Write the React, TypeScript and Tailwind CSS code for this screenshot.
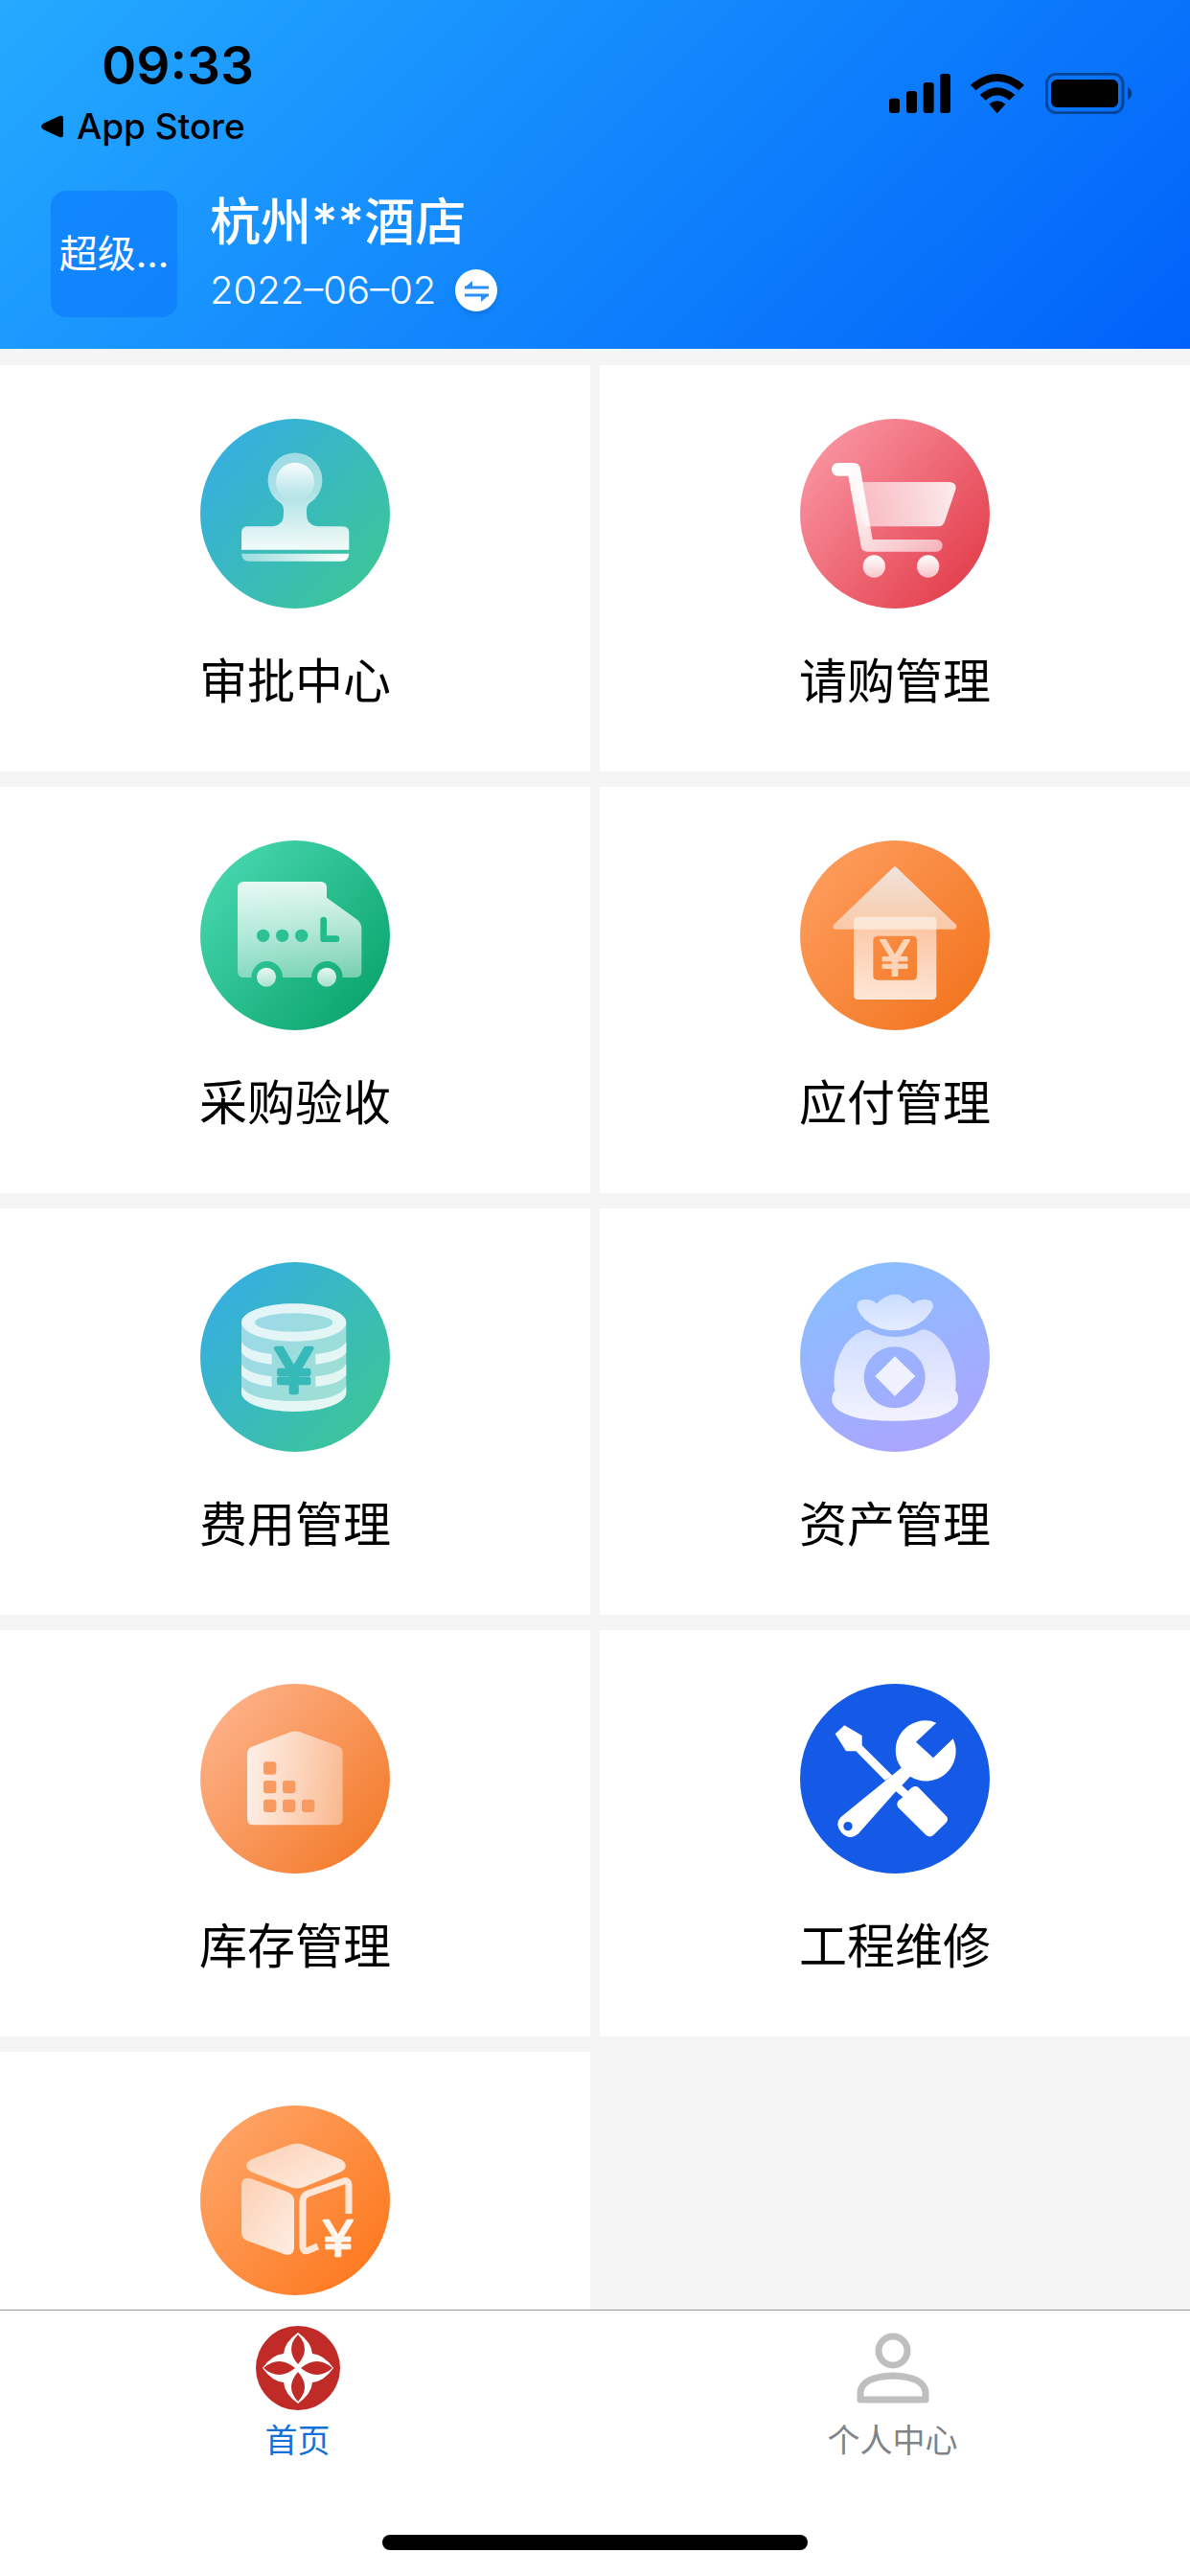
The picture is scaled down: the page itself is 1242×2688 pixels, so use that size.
import type { ReactNode } from 'react';
import clsx from 'clsx';

type CircleIconProps = {
  id: string;
  from: string;
  to: string;
  top?: number;
  children: ReactNode;
};

// round gradient badge shared by every menu icon
function CircleIcon({ id, from, to, top = 51, children }: CircleIconProps) {
  return (
    <svg className="size-[198px]" viewBox={`57 ${top} 594 594`} aria-hidden="true">
      <defs>
        <linearGradient id={id} x1="0.1" y1="0.15" x2="0.9" y2="0.85">
          <stop offset="0" stopColor={from} />
          <stop offset="1" stopColor={to} />
        </linearGradient>
      </defs>
      <circle cx="354" cy={top + 297} r="297" fill={`url(#${id})`} />
      {children}
    </svg>
  );
}

type FadeProps = { id: string; from: number; to: number; horizontal?: boolean };

// white gradient that only changes its opacity
function Fade({ id, from, to, horizontal }: FadeProps) {
  return (
    <linearGradient id={id} x1="0" y1="0" x2={horizontal ? '1' : '0'} y2={horizontal ? '0' : '1'}>
      <stop offset="0" stopColor="#fff" stopOpacity={from} />
      <stop offset="1" stopColor="#fff" stopOpacity={to} />
    </linearGradient>
  );
}

type YenProps = { x: number; y: number; size: number; color: string; weight: number };

function Yen({ x, y, size, color, weight }: YenProps) {
  return (
    <text
      x={x}
      y={y}
      textAnchor="middle"
      fontSize={size}
      fill={color}
      stroke={color}
      strokeWidth={weight}
      strokeLinejoin="round"
      className="font-['Liberation_Sans',sans-serif]"
    >
      ¥
    </text>
  );
}

function StampIcon() {
  return (
    <CircleIcon id="stamp" from="#36afdf" to="#3cc59a">
      <Fade id="stampHead" from={0.95} to={0} />
      <Fade id="stampBar" from={0.5} to={1} horizontal />
      <linearGradient id="stampBody" x1="0" y1="0" x2="0" y2="1">
        <stop offset="0" stopColor="#fff" stopOpacity="0.52" />
        <stop offset="0.4" stopColor="#fff" stopOpacity="0.58" />
        <stop offset="1" stopColor="#fff" stopOpacity="0.94" />
      </linearGradient>
      <path
        d="M186 461V408Q186 388 206 388H285Q318 383 318 350V335Q318 322 306 313A85 85 0 1 1 402 313Q390 322 390 335V350Q390 383 423 388H503Q523 388 523 408V461Z"
        fill="url(#stampBody)"
      />
      <circle cx="354" cy="248" r="60" fill="url(#stampHead)" />
      <path d="M186 473H523Q521 497 500 497H209Q188 497 186 473Z" fill="url(#stampBar)" />
    </CircleIcon>
  );
}

function CartIcon() {
  return (
    <CircleIcon id="cart" from="#f9929f" to="#e4404e">
      <Fade id="cartBasket" from={0.5} to={0.88} horizontal />
      <Fade id="cartWheel" from={1} to={0.65} />
      <linearGradient id="cartFrame" x1="0" y1="0" x2="1" y2="1">
        <stop offset="0" stopColor="#fff" />
        <stop offset="0.3" stopColor="#fff" stopOpacity="0.92" />
        <stop offset="1" stopColor="#fff" stopOpacity="0.56" />
      </linearGradient>
      <path
        d="M236 249H525Q549 251 544 273L510 373Q505 388 490 388H272Q255 388 252 372L232 262Q230 249 236 249Z"
        fill="url(#cartBasket)"
      />
      <path
        d="M176 189H224Q243 189 246 208L284 429H484A19 19 0 0 1 484 467H268Q251 467 248 451L208 230H176A20 20 0 0 1 176 189Z"
        fill="url(#cartFrame)"
      />
      <circle cx="289" cy="513" r="35" fill="url(#cartWheel)" />
      <circle cx="458" cy="513" r="35" fill="url(#cartWheel)" />
    </CircleIcon>
  );
}

function TruckIcon() {
  return (
    <CircleIcon id="truck" from="#45d5ad" to="#0ca66e">
      <Fade id="truckBody" from={0.88} to={0.42} />
      <Fade id="truckWheel" from={0.9} to={0.6} />
      <path
        d="M194 180H434Q453 180 453 200V230L546 297Q562 309 562 326V460Q562 480 543 480H503A49 51 0 0 0 405 480H315A49 51 0 0 0 217 480H194Q174 480 174 460V200Q174 180 194 180Z"
        fill="url(#truckBody)"
      />
      <g fill="#2cc093">
        <circle cx="254" cy="349" r="20" />
        <circle cx="314" cy="349" r="20" />
        <circle cx="374" cy="349" r="20" />
      </g>
      <path d="M443 300V359H483" fill="none" stroke="#24bb8b" strokeWidth="20" strokeLinecap="round" strokeLinejoin="round" />
      <circle cx="264" cy="479" r="30" fill="url(#truckWheel)" />
      <circle cx="453" cy="479" r="30" fill="url(#truckWheel)" />
    </CircleIcon>
  );
}

function HouseIcon() {
  return (
    <CircleIcon id="house" from="#fd9b5a" to="#f37621">
      <linearGradient id="houseRoof" x1="0" y1="0" x2="0" y2="1">
        <stop offset="0" stopColor="#efe4dc" />
        <stop offset="1" stopColor="#fbc8a6" />
      </linearGradient>
      <Fade id="houseBody" from={0.5} to={0.8} />
      <path d="M347 137Q354 128 361 137L546 315Q550 329 540 329H168Q157 329 162 315Z" fill="url(#houseRoof)" />
      <path
        fillRule="evenodd"
        d="M239 290H470Q484 290 484 304V535Q484 549 470 549H239Q225 549 225 535V304Q225 290 239 290ZM300 350Q286 350 286 364V474Q286 488 300 488H409Q423 488 423 474V364Q423 350 409 350Z"
        fill="url(#houseBody)"
      />
      <Yen x={354} y={474} size={162} color="#fcd5b9" weight={6} />
    </CircleIcon>
  );
}

function CoinsIcon() {
  return (
    <CircleIcon id="coins" from="#36afdf" to="#3cc59a">
      <path d="M186 240A164 59 0 0 1 514 240V460A164 59 0 0 1 186 460Z" fill="#fff" fillOpacity="0.5" />
      <g fill="#fff" fillOpacity="0.72">
        <path fillRule="evenodd" d="M186 240A164 59 0 0 1 514 240A164 59 0 0 1 186 240ZM228 240A122 29 0 0 0 472 240A122 29 0 0 0 228 240Z" />
        <path d="M186 300Q203 331 281 339V371Q205 363 186 334Z" />
        <path d="M186 370Q203 401 281 409V441Q205 433 186 404Z" />
        <path d="M514 300Q497 331 418 339V371Q495 363 514 334Z" />
        <path d="M514 370Q497 401 418 409V441Q495 433 514 404Z" />
        <path d="M186 440Q210 485 350 486Q490 485 514 440V460A164 59 0 0 1 186 460Z" />
      </g>
      <Yen x={350} y={460} size={202} color="#37b9ba" weight={13} />
    </CircleIcon>
  );
}

function BagIcon() {
  return (
    <svg className="size-[198px]" viewBox="57 51 594 594" aria-hidden="true">
      <linearGradient id="bag" x1="0.3" y1="0.05" x2="0.7" y2="0.95">
        <stop offset="0" stopColor="#8abeff" />
        <stop offset="1" stopColor="#aba6ff" />
      </linearGradient>
      <Fade id="bagTop" from={0.52} to={0.75} />
      <Fade id="bagBody" from={0.55} to={0.85} />
      <circle cx="354" cy="348" r="297" fill="url(#bag)" />
      <path
        d="M235 188Q236 168 262 168Q285 168 297 181Q325 152 354 152Q385 152 411 181Q425 168 449 168Q474 168 474 190Q470 207 445 232Q405 265 354 265Q300 265 262 232Q237 207 235 188Z"
        fill="url(#bagTop)"
      />
      <path
        fillRule="evenodd"
        d="M272 262Q305 285 354 285Q405 285 438 262Q475 262 510 310Q545 365 545 425Q545 440 543 452Q556 468 551 490Q542 520 482 537Q430 548 354 548Q270 548 227 536Q162 517 157 485Q155 465 167 452Q163 440 163 425Q163 365 198 310Q235 265 272 262ZM257 412A96 96 0 0 0 449 412A96 96 0 0 0 257 412Z"
        fill="url(#bagBody)"
      />
      <path d="M354 346L418 408L354 471L292 408Z" fill="#f0f1ff" />
    </svg>
  );
}

function WarehouseIcon() {
  return (
    <CircleIcon id="warehouse" from="#fdb086" to="#f47d2e" top={53}>
      <Fade id="warehouseBody" from={0.82} to={0.4} horizontal />
      <path
        d="M328 208Q354 195 380 208L488 247Q503 253 503 268V475Q503 495 483 495H224Q204 495 204 475V270Q204 256 218 250Z"
        fill="url(#warehouseBody)"
      />
      <g fill="#f99a60">
        <rect x="255" y="297" width="40" height="40" rx="9" />
        <rect x="255" y="356" width="40" height="40" rx="9" />
        <rect x="315" y="356" width="40" height="40" rx="9" />
        <rect x="255" y="415" width="40" height="40" rx="9" />
        <rect x="315" y="415" width="40" height="40" rx="9" />
        <rect x="375" y="415" width="40" height="40" rx="9" />
      </g>
    </CircleIcon>
  );
}

function ToolsIcon() {
  return (
    <CircleIcon id="tools" from="#155ae6" to="#155ae6" top={53}>
      <g fill="#fff">
        <path d="M167 210L196 183L251 215V246L346 340L323 356L232 264H201Z" />
        <path
          fillRule="evenodd"
          d="M484 175L420 235L474 285L536 225A93 93 0 0 1 402 343L376 371L395 389L405 379Q417 369 428 378L514 466Q524 476 515 487L475 526Q464 536 452 527L364 440Q357 427 366 418L379 408L357 390L240 522Q212 546 186 518Q165 492 184 471L374 316A93 93 0 0 1 484 175ZM193 499A14 14 0 0 0 221 499A14 14 0 0 0 193 499Z"
        />
      </g>
    </CircleIcon>
  );
}

function BoxIcon() {
  return (
    <CircleIcon id="box" from="#fea365" to="#fd7a20" top={54}>
      <linearGradient id="boxFace" x1="0" y1="0" x2="1" y2="1">
        <stop offset="0" stopColor="#fdd0b3" />
        <stop offset="1" stopColor="#fdeee4" />
      </linearGradient>
      <g fill="url(#boxFace)">
        <path d="M332 179Q360 168 388 179L498 223Q527 243 498 262L388 307Q360 320 332 307L216 262Q186 243 216 223Z" />
        <path d="M186 302Q190 275 215 283L330 325Q351 334 351 353V500Q348 525 325 521L205 478Q186 470 186 450Z" />
      </g>
      <path d="M522 393V303Q521 287 506 291L394 330Q378 337 378 353V495Q379 512 392 509L425 495" fill="none" stroke="#fde7d9" strokeWidth="21" />
      <Yen x={488} y={525} size={162} color="#fff6f0" weight={7} />
    </CircleIcon>
  );
}

function StatusIcons() {
  return (
    <div className="flex items-center" aria-hidden="true">
      <svg className="h-[43px] w-[64px]" viewBox="141 108 192 129">
        <rect x="141" y="188" width="33" height="46" rx="9" />
        <rect x="195" y="165" width="33" height="69" rx="9" />
        <rect x="248" y="138" width="33" height="96" rx="9" />
        <rect x="300" y="111" width="33" height="123" rx="9" />
      </svg>
      <svg className="ml-[21px] h-[43px] w-[56px]" viewBox="398 108 168 129">
        <path d="M398 146Q481 76 566 146L549 163Q481 107 414 163Z" />
        <path d="M427 177Q481 130 537 177L519 194Q481 163 445 194Z" />
        <path d="M456 206Q481 186 507 206L481 235Z" />
      </svg>
      <svg className="ml-[22px] h-[43px] w-[90px]" viewBox="630 108 270 129">
        <rect x="634" y="112" width="239" height="121" rx="30" fill="none" stroke="#000" strokeOpacity="0.4" strokeWidth="9" />
        <rect x="648" y="129" width="210" height="87" rx="18" />
        <path d="M888 152Q900 158 900 172Q900 187 888 193Z" fillOpacity="0.5" />
      </svg>
    </div>
  );
}

function SwapIcon() {
  return (
    <svg className="size-11" viewBox="0 0 44 44" aria-hidden="true">
      <circle cx="22" cy="22" r="22" fill="#fff" />
      <path d="M10 19H35M10 27H35" fill="none" stroke="#2b8ff5" strokeWidth="3" />
      <path d="M10 19L18 12V19ZM35 27L27 34V27Z" fill="#2b8ff5" />
    </svg>
  );
}

function LogoIcon() {
  return (
    <svg className="size-[88px]" viewBox="-44 -44 88 88" aria-hidden="true">
      <circle r="44" fill="#c02b27" />
      <path d="M0-37Q14-27 15-15Q27-14 37 0Q27 14 15 15Q14 27 0 37Q-14 27-15 15Q-27 14-37 0Q-27-14-15-15Q-14-27 0-37Z" fill="#fff" />
      <g fill="#c02b27">
        <path d="M0-35Q14-20 0-4Q-14-20 0-35Z" />
        <path d="M0 35Q14 20 0 4Q-14 20 0 35Z" />
        <path d="M-36 0Q-20-14-3 0Q-20 14-36 0Z" />
        <path d="M36 0Q20-14 3 0Q20 14 36 0Z" />
      </g>
    </svg>
  );
}

function PersonIcon() {
  return (
    <svg className="size-[88px]" viewBox="0 0 88 88" fill="none" stroke="#bfbfbf" aria-hidden="true">
      <circle cx="44" cy="26" r="15" strokeWidth="7" />
      <path d="M10 77V69Q12 53 44 52Q76 53 78 69V77Z" strokeWidth="7" strokeLinejoin="round" />
    </svg>
  );
}

const menus = [
  { name: '审批中心', href: '#approval', icon: <StampIcon /> },
  { name: '请购管理', href: '#requisition', icon: <CartIcon /> },
  { name: '采购验收', href: '#acceptance', icon: <TruckIcon /> },
  { name: '应付管理', href: '#payable', icon: <HouseIcon /> },
  { name: '费用管理', href: '#expense', icon: <CoinsIcon /> },
  { name: '资产管理', href: '#asset', icon: <BagIcon /> },
  { name: '库存管理', href: '#stock', icon: <WarehouseIcon /> },
  { name: '工程维修', href: '#repair', icon: <ToolsIcon /> },
  { name: '', href: '#price', icon: <BoxIcon /> },
];

const tabs = [
  { name: '首页', href: '#home', icon: <LogoIcon />, active: true },
  { name: '个人中心', href: '#me', icon: <PersonIcon />, active: false },
];

export default function App() {
  return (
    <div className="flex h-screen flex-col bg-[#f5f5f5] font-['Inter','Noto_Sans_CJK_SC',sans-serif] text-black">
      <header className="bg-linear-[135deg,#24aaff,#0062fa] pb-[33px]">
        <div className="flex items-start justify-between pt-9 pr-[61px] pl-[42px]">
          <div>
            <div className="pl-16 text-[55px] leading-[64px] font-semibold">09:33</div>
            <a href="#appstore" className="flex items-center gap-[14px] text-[37px] leading-[64px] font-medium">
              <svg className="size-6" viewBox="0 0 24 24" aria-hidden="true">
                <path d="M3 9L20 1Q24 0 24 3V21Q24 24 20 23L3 15Q-1 12 3 9Z" />
              </svg>
              App Store
            </a>
          </div>
          <div className="pt-10">
            <StatusIcons />
          </div>
        </div>

        <div className="mt-[35px] flex items-center gap-[34px] pl-[53px] text-white">
          <div className="flex size-[132px] items-center justify-center rounded-2xl bg-[#0a78fc]/60 text-[40px]">
            超级...
          </div>
          <div>
            <h1 className="text-[53px] leading-[66px] font-medium">杭州**酒店</h1>
            <div className="mt-[10px] flex items-center gap-5 text-[40px] leading-[56px] font-light">
              <span>2022–06–02</span>
              <button type="button" aria-label="切换" className="rounded-full shadow-md">
                <SwapIcon />
              </button>
            </div>
          </div>
        </div>
      </header>

      <main className="min-h-0 flex-1 overflow-y-auto pt-[17px] [scrollbar-width:none]">
        <div className="grid grid-cols-2 gap-x-[10px] gap-y-4">
          {menus.map((menu) => (
            <a key={menu.href} href={menu.href} className="flex flex-col items-center bg-white pt-14 pb-[61px]">
              {menu.icon}
              <span className="mt-[43px] h-[66px] text-[50px] leading-[66px]">{menu.name}</span>
            </a>
          ))}
        </div>
      </main>

      <nav className="border-t border-[#999] bg-white pt-4 pb-[27px]">
        <div className="flex">
          {tabs.map((tab) => (
            <a
              key={tab.href}
              href={tab.href}
              className={clsx(
                'flex flex-1 flex-col items-center gap-2 text-[34px] leading-[48px]',
                tab.active ? 'text-[#1371d9]' : 'text-[#808388]'
              )}
            >
              {tab.icon}
              {tab.name}
            </a>
          ))}
        </div>
        <div className="mx-auto mt-[74px] h-4 w-[444px] rounded-full bg-black" />
      </nav>
    </div>
  );
}
